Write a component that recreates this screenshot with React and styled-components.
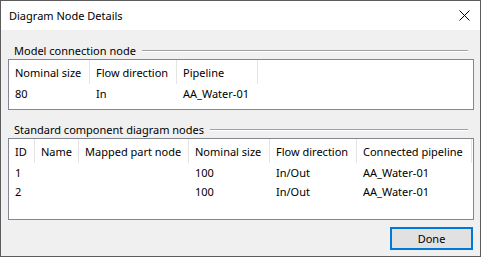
import React from "react";
import styled, { createGlobalStyle } from "styled-components";

const Global = createGlobalStyle`
  html, body { margin: 0; padding: 0; background: #f0f0f0; }
  * { box-sizing: border-box; }
  body { font-family: "Noto Sans", "Segoe UI", sans-serif; font-size: 11px; color: #000; }
`;

const Window = styled.div`
  width: 481px;
  height: 257px;
  border: 1px solid #5c5c5c;
  background: #f0f0f0;
  display: flex;
  flex-direction: column;
`;

const TitleBar = styled.div`
  height: 29px;
  background: #fff;
  display: flex;
  align-items: center;
  justify-content: space-between;
  padding: 0 10px 0 8px;
  flex-shrink: 0;
`;

const Title = styled.span`
  font-size: 11px;
  line-height: 16px;
`;

const Body = styled.div`
  flex: 1;
  display: flex;
  flex-direction: column;
  padding: 12px 6px 0 7px;
`;

const GroupHeader = styled.div`
  height: 17px;
  display: flex;
  align-items: center;
  gap: 6px;
  padding: 0 6px;
  margin-top: ${(p) => p.$top || 0}px;
`;

const GroupLabel = styled.span`
  white-space: nowrap;
  line-height: 16px;
`;

const GroupLine = styled.div`
  flex: 1;
  height: 2px;
  border-top: 1px solid #a0a0a0;
  border-bottom: 1px solid #ffffff;
  margin-top: 1px;
`;

const List = styled.div`
  height: ${(p) => p.$h}px;
  border: 1px solid #828790;
  background: #fff;
  display: flex;
  flex-direction: column;
`;

const Row = styled.div`
  display: grid;
  grid-template-columns: ${(p) => p.$cols};
  height: ${(p) => (p.$header ? 24 : 19)}px;
  align-items: center;
`;

const HeadCell = styled.div`
  height: 100%;
  display: flex;
  align-items: center;
  padding-left: 6px;
  border-right: 1px solid #e5e5e5;
  white-space: nowrap;
  overflow: hidden;
`;

const Cell = styled.div`
  padding-left: 6px;
  white-space: nowrap;
  overflow: hidden;
`;

const Footer = styled.div`
  display: flex;
  justify-content: flex-end;
  padding: 7px 1px 0 0;
`;

const Button = styled.button`
  width: 83px;
  height: 23px;
  border: 2px solid #0078d7;
  background: #e1e1e1;
  font-family: inherit;
  font-size: 11px;
  color: #000;
  padding: 0;
`;

const CloseIcon = () => (
  <svg width="11" height="11" viewBox="0 0 11 11">
    <path d="M0.5 0.5 L10.5 10.5 M10.5 0.5 L0.5 10.5" stroke="#000" strokeWidth="1" />
  </svg>
);

const modelCols = "81px 87px 81px";
const stdCols = "26px 44px 110px 81px 87px 115px";

export default function App() {
  return (
    <>
      <Global />
      <Window>
        <TitleBar>
          <Title>Diagram Node Details</Title>
          <CloseIcon />
        </TitleBar>
        <Body>
          <GroupHeader>
            <GroupLabel>Model connection node</GroupLabel>
            <GroupLine />
          </GroupHeader>
          <List $h={51}>
            <Row $header $cols={modelCols}>
              <HeadCell>Nominal size</HeadCell>
              <HeadCell>Flow direction</HeadCell>
              <HeadCell>Pipeline</HeadCell>
            </Row>
            <Row $cols={modelCols}>
              <Cell>80</Cell>
              <Cell>In</Cell>
              <Cell>AA_Water-01</Cell>
            </Row>
          </List>
          <GroupHeader $top={11}>
            <GroupLabel>Standard component diagram nodes</GroupLabel>
            <GroupLine />
          </GroupHeader>
          <List $h={82}>
            <Row $header $cols={stdCols}>
              <HeadCell>ID</HeadCell>
              <HeadCell>Name</HeadCell>
              <HeadCell>Mapped part node</HeadCell>
              <HeadCell>Nominal size</HeadCell>
              <HeadCell>Flow direction</HeadCell>
              <HeadCell>Connected pipeline</HeadCell>
            </Row>
            {[1, 2].map((id) => (
              <Row key={id} $cols={stdCols}>
                <Cell>{id}</Cell>
                <Cell />
                <Cell />
                <Cell>100</Cell>
                <Cell>In/Out</Cell>
                <Cell>AA_Water-01</Cell>
              </Row>
            ))}
          </List>
          <Footer>
            <Button>Done</Button>
          </Footer>
        </Body>
      </Window>
    </>
  );
}
